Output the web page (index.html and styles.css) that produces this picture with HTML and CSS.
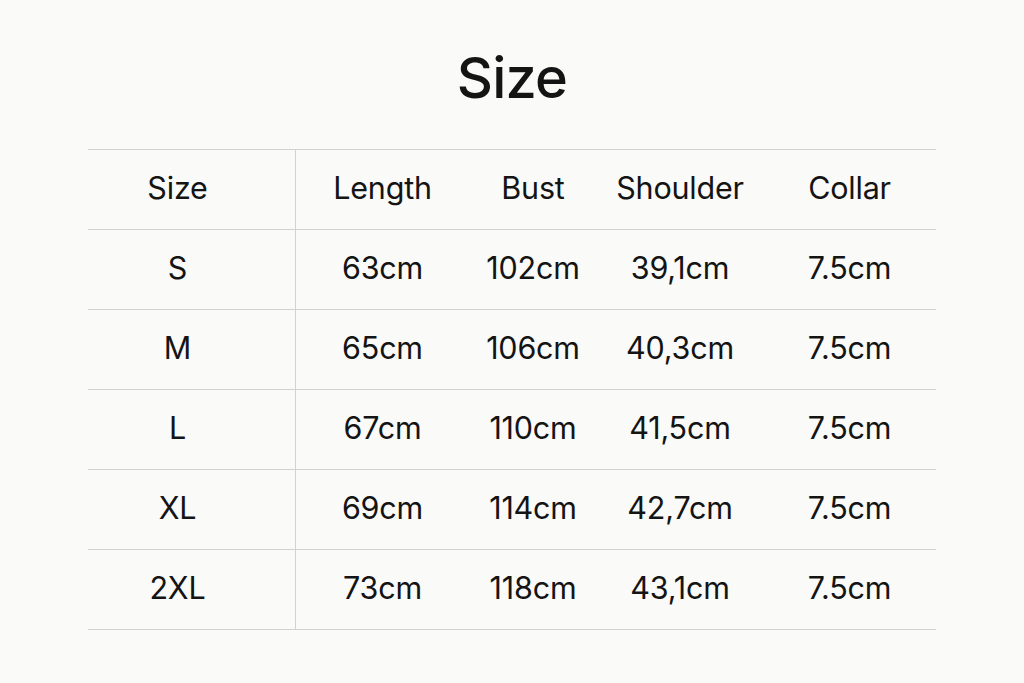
FILE: index.html
```html
<!DOCTYPE html>
<html>
<head>
<meta charset="utf-8">
<link rel="stylesheet" href="styles.css">
</head>
<body>
<main class="page">
  <h1 class="title">Size</h1>
  <div class="table">
    <div class="row head">
      <div class="cell first">Size</div>
      <div class="cell">Length</div>
      <div class="cell">Bust</div>
      <div class="cell">Shoulder</div>
      <div class="cell">Collar</div>
    </div>
    <div class="row">
      <div class="cell first">S</div>
      <div class="cell">63cm</div>
      <div class="cell">102cm</div>
      <div class="cell">39,1cm</div>
      <div class="cell">7.5cm</div>
    </div>
    <div class="row">
      <div class="cell first">M</div>
      <div class="cell">65cm</div>
      <div class="cell">106cm</div>
      <div class="cell">40,3cm</div>
      <div class="cell">7.5cm</div>
    </div>
    <div class="row">
      <div class="cell first">L</div>
      <div class="cell">67cm</div>
      <div class="cell">110cm</div>
      <div class="cell">41,5cm</div>
      <div class="cell">7.5cm</div>
    </div>
    <div class="row">
      <div class="cell first">XL</div>
      <div class="cell">69cm</div>
      <div class="cell">114cm</div>
      <div class="cell">42,7cm</div>
      <div class="cell">7.5cm</div>
    </div>
    <div class="row">
      <div class="cell first">2XL</div>
      <div class="cell">73cm</div>
      <div class="cell">118cm</div>
      <div class="cell">43,1cm</div>
      <div class="cell">7.5cm</div>
    </div>
  </div>
</main>
</body>
</html>
```
FILE: styles.css
```css
html, body {
  margin: 0;
  padding: 0;
  background: #fafaf8;
}
body {
  font-family: Inter, "Noto Sans", "Liberation Sans", sans-serif;
  color: #141414;
  width: 1024px;
  height: 683px;
  overflow: hidden;
}
.page {
  padding-top: 45px;
  display: flex;
  flex-direction: column;
  align-items: center;
}
.title {
  margin: 0 0 37px 0;
  font-size: 56px;
  line-height: 67px;
  font-weight: 500;
  letter-spacing: -0.8px;
}
.table {
  width: 848px;
  border-top: 1px solid #d2d2d2;
}
.row {
  display: grid;
  grid-template-columns: 208px 173px 128px 166px 173px;
  height: 80px;
  box-sizing: border-box;
  border-bottom: 1px solid #d2d2d2;
}
.cell {
  display: flex;
  align-items: center;
  justify-content: center;
  padding-bottom: 4px;
  font-size: 30.5px;
  font-weight: 400;
  letter-spacing: -0.2px;
}
.cell.first {
  border-right: 1px solid #d2d2d2;
  padding-right: 28px;
}
```
